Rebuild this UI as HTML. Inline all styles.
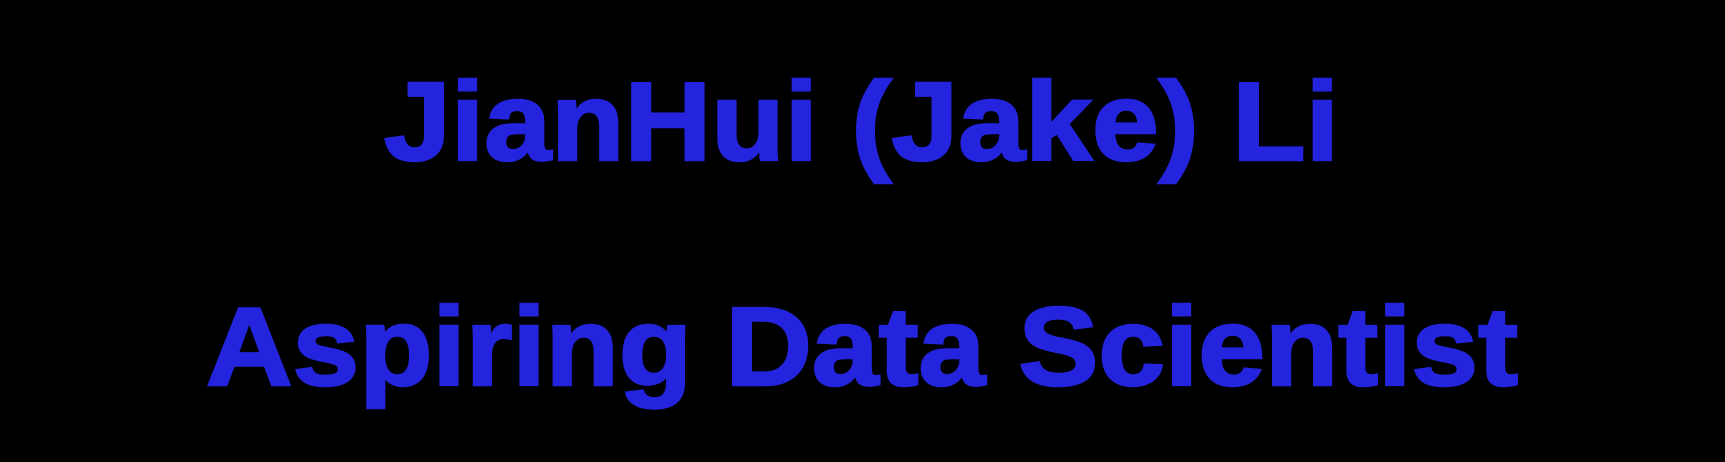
<!DOCTYPE html>
<html><head><meta charset="utf-8"><style>
html,body{margin:0;padding:0;background:#000;width:1725px;height:462px;overflow:hidden}
svg{display:block}
text{font-family:"Liberation Sans",sans-serif;font-weight:bold;fill:#2424de;stroke:#2424de;stroke-width:2.5}
</style></head><body>
<svg width="1725" height="462" viewBox="0 0 1725 462">
<text x="384" y="160" font-size="111" textLength="955" lengthAdjust="spacingAndGlyphs">JianHui (Jake) Li</text>
<text x="206" y="385" font-size="111" textLength="1312" lengthAdjust="spacingAndGlyphs">Aspiring Data Scientist</text>
</svg>
</body></html>
